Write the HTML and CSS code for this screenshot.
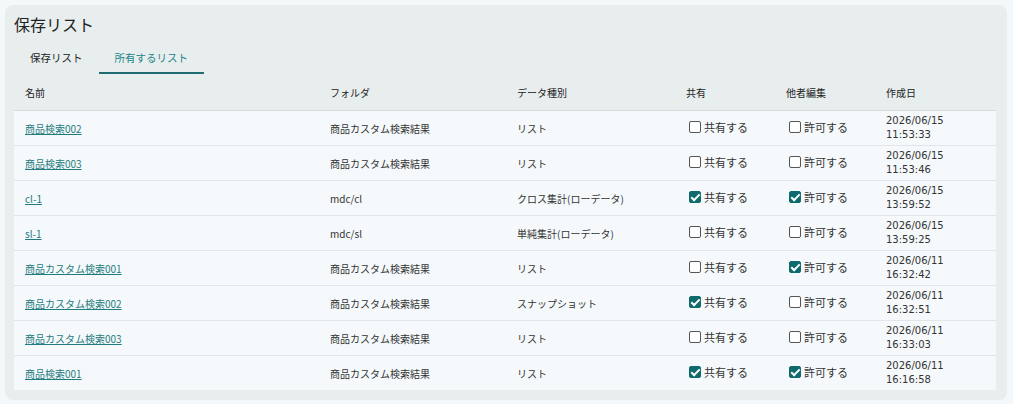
FILE: index.html
```html
<!DOCTYPE html>
<html>
<head>
    <title>保存リスト</title>
    <link rel="stylesheet" href="styles.css">
</head>
<body>
    <div class="card">
        <h1 class="title">保存リスト</h1>
        <div class="tabs">
            <div class="tab">保存リスト</div>
            <div class="tab active">所有するリスト</div>
        </div>
        <table class="list">
            <thead>
                <tr>
                    <th class="c-name">名前</th>
                    <th class="c-folder">フォルダ</th>
                    <th class="c-type">データ種別</th>
                    <th class="c-share">共有</th>
                    <th class="c-edit">他者編集</th>
                    <th class="c-date">作成日</th>
                </tr>
            </thead>
            <tbody>
                <tr>
                    <td><a href="#">商品検索002</a></td>
                    <td>商品カスタム検索結果</td>
                    <td>リスト</td>
                    <td><label class="chk"><input type="checkbox"> 共有する</label></td>
                    <td><label class="chk"><input type="checkbox"> 許可する</label></td>
                    <td class="date">2026/06/15<br>11:53:33</td>
                </tr>
                <tr>
                    <td><a href="#">商品検索003</a></td>
                    <td>商品カスタム検索結果</td>
                    <td>リスト</td>
                    <td><label class="chk"><input type="checkbox"> 共有する</label></td>
                    <td><label class="chk"><input type="checkbox"> 許可する</label></td>
                    <td class="date">2026/06/15<br>11:53:46</td>
                </tr>
                <tr>
                    <td><a href="#">cl-1</a></td>
                    <td>mdc/cl</td>
                    <td>クロス集計(ローデータ)</td>
                    <td><label class="chk"><input type="checkbox" checked> 共有する</label></td>
                    <td><label class="chk"><input type="checkbox" checked> 許可する</label></td>
                    <td class="date">2026/06/15<br>13:59:52</td>
                </tr>
                <tr>
                    <td><a href="#">sl-1</a></td>
                    <td>mdc/sl</td>
                    <td>単純集計(ローデータ)</td>
                    <td><label class="chk"><input type="checkbox"> 共有する</label></td>
                    <td><label class="chk"><input type="checkbox"> 許可する</label></td>
                    <td class="date">2026/06/15<br>13:59:25</td>
                </tr>
                <tr>
                    <td><a href="#">商品カスタム検索001</a></td>
                    <td>商品カスタム検索結果</td>
                    <td>リスト</td>
                    <td><label class="chk"><input type="checkbox"> 共有する</label></td>
                    <td><label class="chk"><input type="checkbox" checked> 許可する</label></td>
                    <td class="date">2026/06/11<br>16:32:42</td>
                </tr>
                <tr>
                    <td><a href="#">商品カスタム検索002</a></td>
                    <td>商品カスタム検索結果</td>
                    <td>スナップショット</td>
                    <td><label class="chk"><input type="checkbox" checked> 共有する</label></td>
                    <td><label class="chk"><input type="checkbox"> 許可する</label></td>
                    <td class="date">2026/06/11<br>16:32:51</td>
                </tr>
                <tr>
                    <td><a href="#">商品カスタム検索003</a></td>
                    <td>商品カスタム検索結果</td>
                    <td>リスト</td>
                    <td><label class="chk"><input type="checkbox"> 共有する</label></td>
                    <td><label class="chk"><input type="checkbox"> 許可する</label></td>
                    <td class="date">2026/06/11<br>16:33:03</td>
                </tr>
                <tr>
                    <td><a href="#">商品検索001</a></td>
                    <td>商品カスタム検索結果</td>
                    <td>リスト</td>
                    <td><label class="chk"><input type="checkbox" checked> 共有する</label></td>
                    <td><label class="chk"><input type="checkbox" checked> 許可する</label></td>
                    <td class="date">2026/06/11<br>16:16:58</td>
                </tr>
            </tbody>
        </table>
    </div>
</body>
</html>
```

FILE: styles.css
```css
body {
    margin: 0;
    padding: 5px 6px 4px 5px;
    background-color: #f3f8fa;
    font-family: "Noto Sans CJK JP", sans-serif;
    font-size: 10px;
    color: #222;
}

.card {
    background-color: #e8eeee;
    border-radius: 8px;
    padding: 8px 11px 10px 9px;
}

.title {
    margin: 0;
    font-size: 16px;
    font-weight: normal;
    line-height: 22px;
    color: #222;
}

.tabs {
    display: flex;
    margin-top: 13px;
}

.tab {
    font-size: 10.5px;
    line-height: 15px;
    padding: 2px 16px 7px 16px;
    border-bottom: 2px solid transparent;
}

.tab.active {
    color: #23858a;
    border-bottom-color: #1d6d71;
}

.list {
    width: 100%;
    border-collapse: collapse;
}

.list th {
    font-weight: normal;
    text-align: left;
    height: 36px;
    padding: 0 11px;
    border-bottom: 1px solid #d4dadb;
}

.list td {
    background-color: #f5f9fb;
    height: 34px;
    padding: 0 11px;
    border-bottom: 1px solid #e1e6e8;
    color: #333;
}

.list tbody tr:last-child td {
    border-bottom: none;
}

.c-name { width: 283px; }
.c-folder { width: 165px; }
.c-type { width: 147px; }
.c-share { width: 78px; }
.c-edit { width: 78px; }

.list a {
    color: #1f7b80;
    text-decoration: underline;
}

.list td.date {
    font-family: "DejaVu Sans", sans-serif;
    line-height: 14px;
}

.chk {
    display: inline-flex;
    align-items: center;
    font-size: 11px;
    line-height: 14px;
    margin-left: 3px;
}

.chk input {
    appearance: none;
    width: 12px;
    height: 12px;
    margin: 0 3px 0 0;
    border: 1px solid #555;
    border-radius: 2px;
    background-color: #fff;
    position: relative;
}

.chk input:checked {
    background-color: #0e6a6d;
    border-color: #0e6a6d;
}

.chk input:checked::after {
    content: "";
    position: absolute;
    left: 3px;
    top: 0px;
    width: 3px;
    height: 7px;
    border: solid #fff;
    border-width: 0 2px 2px 0;
    transform: rotate(45deg);
}
```
